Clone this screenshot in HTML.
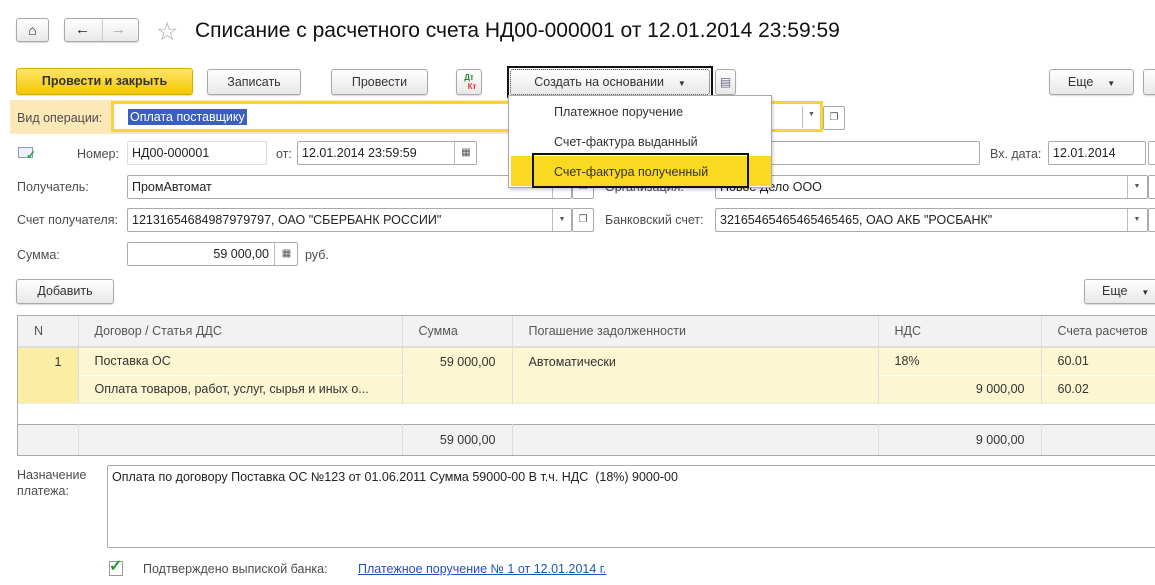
<!DOCTYPE html>
<html><head><meta charset="utf-8"><style>
*{box-sizing:border-box;margin:0;padding:0}
body{width:1155px;height:585px;overflow:hidden;background:#fff;font-family:"Liberation Sans",Arial,sans-serif;font-size:12px;color:#333;position:relative}
.a{position:absolute;white-space:nowrap}
.btn{position:absolute;border:1px solid #a9a9a9;border-radius:3px;background:linear-gradient(#fff,#e8e8e8);text-align:center;color:#333;font-size:12.5px;box-shadow:0 1px 1px rgba(0,0,0,.15)}
.inp{position:absolute;border:1px solid #aaa;background:#fff;border-radius:2px;height:24px;padding:4px 0 0 4px;font-size:12.5px;color:#222;white-space:nowrap;overflow:hidden}
.lbl{position:absolute;font-size:12.5px;color:#4d4d4d;white-space:nowrap}
.dd{position:absolute;top:0;width:19px;height:22px;border-left:1px solid #bbb;text-align:center;font-size:7px;color:#555;line-height:22px}
.op{position:absolute;width:22px;height:24px;border:1px solid #aaa;border-radius:2px;background:#fff;font-size:10px;text-align:center;line-height:22px;color:#555}
td{border-right:1px solid #ddd;padding:0 0 0 16px;font-size:12.5px;color:#333;white-space:nowrap}
.r{text-align:right;padding-right:16px}
</style></head><body>
<div class="btn" style="left:16px;top:18px;width:33px;height:24px;font-size:14px;line-height:22px;color:#222">&#8962;</div>
<div class="btn" style="left:64px;top:18px;width:75px;height:24px;line-height:21px;font-size:15px"><span style="position:absolute;left:10px;color:#222">&#8592;</span><span style="position:absolute;left:37px;top:0;height:22px;border-left:1px solid #ccc"></span><span style="position:absolute;left:46px;color:#aaa">&#8594;</span></div>
<div class="a" style="left:156px;top:17px;font-size:25px;color:#aaa">&#9734;</div>
<div class="a" style="left:195px;top:19px;font-size:21px;color:#111">Списание с расчетного счета НД00-000001 от 12.01.2014 23:59:59</div>

<div class="btn" style="left:16px;top:68px;width:177px;height:27px;line-height:25px;font-weight:bold;background:linear-gradient(#fde46a,#f5c800);border-color:#d9ad00;color:#333">Провести и закрыть</div>
<div class="btn" style="left:207px;top:69px;width:94px;height:26px;line-height:24px">Записать</div>
<div class="btn" style="left:331px;top:69px;width:97px;height:26px;line-height:24px">Провести</div>
<div class="btn" style="left:456px;top:69px;width:26px;height:26px;font-size:8px;font-weight:bold;line-height:9px;padding-top:3px"><span style="color:#2a8a2a">Дт</span><br><span style="color:#e33;padding-left:6px">Кт</span></div>
<div class="a" style="left:507px;top:66px;width:206px;height:32px;border:2px solid #111"></div>
<div class="btn" style="left:510px;top:69px;width:200px;height:26px;line-height:24px;border:1px dotted #444">Создать на основании &nbsp;&nbsp;&nbsp;<span style="font-size:8px">&#9660;</span></div>
<div class="btn" style="left:715px;top:69px;width:21px;height:26px;line-height:24px;font-size:12px;color:#668">&#9636;</div>
<div class="btn" style="left:1049px;top:69px;width:85px;height:26px;line-height:24px">Еще &nbsp;&nbsp;&nbsp;<span style="font-size:8px">&#9660;</span></div>
<div class="btn" style="left:1143px;top:69px;width:20px;height:26px"></div>

<div class="a" style="left:10px;top:100px;width:500px;height:34px;background:#fde9b8"></div>
<div class="lbl" style="left:17px;top:111px">Вид операции:</div>
<div class="a" style="left:111px;top:101px;width:712px;height:31px;border:3px solid #f7d23b;background:#fff"></div>
<div class="a" style="left:128px;top:109px;background:#3a5fbf;color:#fff;font-size:12.5px;padding:1px 2px">Оплата поставщику</div>
<div class="a" style="left:802px;top:106px;width:1px;height:22px;background:#bbb"></div>
<div class="a" style="left:808px;top:111px;font-size:7px;color:#555">&#9660;</div>
<div class="op" style="left:823px;top:106px">&#10064;</div>

<div class="a" style="left:18px;top:147px;width:15px;height:11px;border:1px solid #89a;background:#eef"></div>
<div class="a" style="left:26px;top:148px;color:#2a2;font-size:12px;font-weight:bold">&#10003;</div>
<div class="lbl" style="left:77px;top:147px">Номер:</div>
<div class="inp" style="left:127px;top:141px;width:140px;border-color:#ddd">НД00-000001</div>
<div class="lbl" style="left:276px;top:147px">от:</div>
<div class="inp" style="left:297px;top:141px;width:180px">12.01.2014 23:59:59<div class="dd" style="left:156px;width:23px;font-size:10px">&#9638;</div></div>
<div class="inp" style="left:760px;top:141px;width:220px"></div>
<div class="lbl" style="left:990px;top:147px">Вх. дата:</div>
<div class="inp" style="left:1048px;top:141px;width:98px">12.01.2014</div>
<div class="op" style="left:1148px;top:141px">&#9638;</div>

<div class="lbl" style="left:17px;top:180px">Получатель:</div>
<div class="inp" style="left:127px;top:175px;width:445px">ПромАвтомат<div class="dd" style="left:424px">&#9660;</div></div>
<div class="op" style="left:572px;top:175px">&#10064;</div>
<div class="lbl" style="left:605px;top:180px">Организация:</div>
<div class="inp" style="left:715px;top:175px;width:433px">Новое Дело ООО<div class="dd" style="left:411px">&#9660;</div></div>
<div class="op" style="left:1148px;top:175px"></div>

<div class="lbl" style="left:17px;top:213px">Счет получателя:</div>
<div class="inp" style="left:127px;top:208px;width:445px">12131654684987979797, ОАО "СБЕРБАНК РОССИИ"<div class="dd" style="left:424px">&#9660;</div></div>
<div class="op" style="left:572px;top:208px">&#10064;</div>
<div class="lbl" style="left:605px;top:213px">Банковский счет:</div>
<div class="inp" style="left:715px;top:208px;width:433px">32165465465465465465, ОАО АКБ "РОСБАНК"<div class="dd" style="left:411px">&#9660;</div></div>
<div class="op" style="left:1148px;top:208px"></div>

<div class="lbl" style="left:17px;top:248px">Сумма:</div>
<div class="inp" style="left:127px;top:242px;width:171px;text-align:right;padding-right:28px">59 000,00<div class="dd" style="left:146px;width:24px;font-size:10px">&#9638;</div></div>
<div class="lbl" style="left:305px;top:248px">руб.</div>

<div class="btn" style="left:16px;top:279px;width:98px;height:25px;line-height:23px">Добавить</div>
<div class="btn" style="left:1084px;top:279px;width:80px;height:25px;line-height:23px;text-align:left;padding-left:17px">Еще &nbsp;&nbsp;&nbsp;<span style="font-size:8px">&#9660;</span></div>

<div class="a" style="left:17px;top:315px;width:1150px;height:141px;border:1px solid #aaa;overflow:hidden">
<table style="border-collapse:collapse;width:1150px;table-layout:fixed">
<colgroup><col style="width:60px"><col style="width:324px"><col style="width:110px"><col style="width:366px"><col style="width:163px"><col style="width:127px"></colgroup>
<tr style="height:31px;background:#f2f2f2;border-bottom:2px solid #ddd"><td style="color:#555">N</td><td style="color:#555">Договор / Статья ДДС</td><td style="color:#555">Сумма</td><td style="color:#555">Погашение задолженности</td><td style="color:#555">НДС</td><td style="color:#555">Счета расчетов</td></tr>
<tr style="height:28px;background:#fcf6d2"><td class="r" rowspan="2" style="background:#fbeda4;vertical-align:top;padding-top:7px">1</td><td style="border-bottom:1px solid #fff">Поставка ОС</td><td class="r" rowspan="2" style="vertical-align:top;padding-top:7px">59 000,00</td><td rowspan="2" style="vertical-align:top;padding-top:7px">Автоматически</td><td style="border-bottom:1px solid #fff">18%</td><td style="border-bottom:1px solid #fff">60.01</td></tr>
<tr style="height:28px;background:#fcf6d2"><td>Оплата товаров, работ, услуг, сырья и иных о...</td><td class="r">9 000,00</td><td>60.02</td></tr>
<tr style="height:21px;border-top:1px solid #eee"><td style="border:0"></td><td style="border:0"></td><td style="border:0"></td><td style="border:0"></td><td style="border:0"></td><td style="border:0"></td></tr>
<tr style="height:31px;background:#f2f2f2;border-top:1px solid #aaa"><td></td><td></td><td class="r">59 000,00</td><td></td><td class="r">9 000,00</td><td></td></tr>
</table></div>

<div class="lbl" style="left:17px;top:467px;line-height:16px">Назначение<br>платежа:</div>
<div class="a" style="left:107px;top:465px;width:1060px;height:83px;border:1px solid #aaa;border-radius:2px;padding:4px 0 0 4px;font-size:12.5px;color:#222">Оплата по договору Поставка ОС №123 от 01.06.2011 Сумма 59000-00 В т.ч. НДС &nbsp;(18%) 9000-00</div>

<div class="a" style="left:109px;top:561px;width:14px;height:15px;border:1px solid #999;background:#fff"></div>
<div class="a" style="left:109px;top:556px;color:#1a9a30;font-size:16px;font-weight:bold">&#10003;</div>
<div class="lbl" style="left:143px;top:562px">Подтверждено выпиской банка:</div>
<div class="a" style="left:358px;top:562px;color:#1a55b8;text-decoration:underline;font-size:12.5px">Платежное поручение № 1 от 12.01.2014 г.</div>

<div class="a" style="left:508px;top:95px;width:264px;height:93px;background:#fff;border:1px solid #aaa;box-shadow:1px 2px 3px rgba(0,0,0,.2)"></div>
<div class="lbl" style="left:554px;top:105px;color:#333">Платежное поручение</div>
<div class="lbl" style="left:554px;top:135px;color:#333">Счет-фактура выданный</div>
<div class="a" style="left:511px;top:156px;width:260px;height:30px;background:#f9d922"></div>
<div class="a" style="left:532px;top:153px;width:217px;height:35px;border:2px solid #111"></div>
<div class="lbl" style="left:554px;top:165px;color:#333">Счет-фактура полученный</div>
</body></html>
